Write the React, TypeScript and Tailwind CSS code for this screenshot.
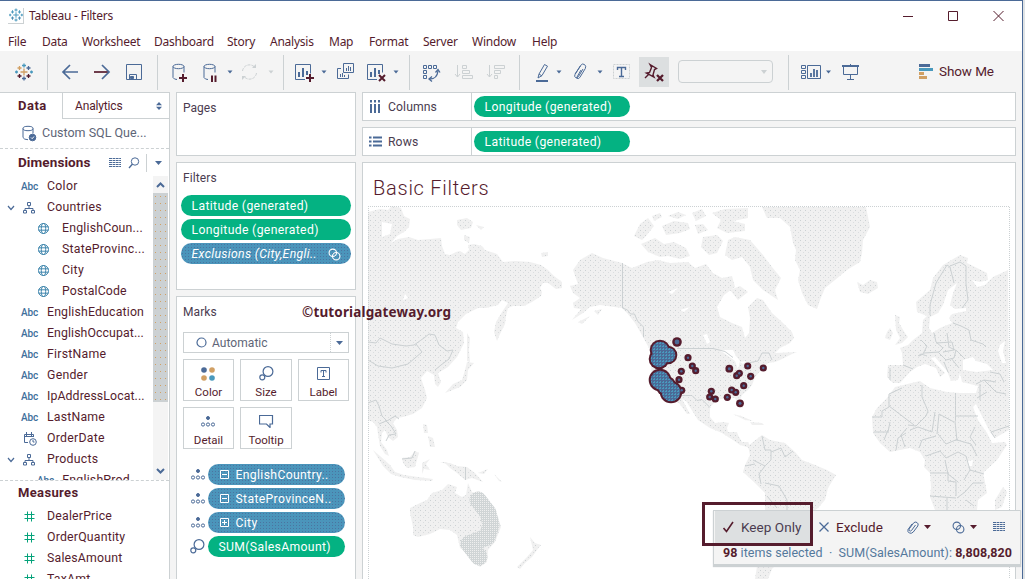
import React from "react";

const INK = "#551c2d";
const BLUE = "#4b6a97";
const GREY = "#ccd1d3";

/* Toolbar cell: drawing coordinates run along the whole bar. */
function Cell({ x, w, children, className = "" }: { x: number; w: number; children?: React.ReactNode; className?: string }) {
  return (
    <svg width={w} height={41} viewBox={`${x} 51 ${w} 41`} className={`block shrink-0 ${className}`} fill="none" stroke={BLUE} strokeWidth={1}>
      {children}
    </svg>
  );
}

const caret = (x: number, color = BLUE) => <path d={`M${x - 2.5} 70.5h5l-2.5 3z`} fill={color} stroke="none" />;
const sep = (x: number) => <path d={`M${x}.5 55v35`} stroke={GREY} />;

function Sparkle({ mixed = false, size = 18 }: { mixed?: boolean; size?: number }) {
  const c = mixed ? ["#d1a064", "#4999bd", "#d1a064", "#551c2d", "#4b6a97"] : ["#4999bd", "#4999bd", "#4999bd", "#4b8fb5", "#4999bd"];
  return (
    <svg width={size} height={size} viewBox="0 0 18 18" fill="none" strokeWidth={1.3}>
      <path d="M9 5.500v7M5.500 9h7" stroke={c[0]} />
      <path d="M9 .5v4M7 2.500h4" stroke={c[1]} />
      <path d="M9 13.500v4M7 15.500h4" stroke={c[4]} />
      <path d="M4.500 3v4M2.500 5h4" stroke={c[2]} />
      <path d="M13.500 3v4M11.500 5h4" stroke={c[4]} />
      <path d="M4.500 11v4M2.500 13h4" stroke={c[3]} />
      <path d="M13.500 11v4M11.500 13h4" stroke={c[3]} />
      <path d="M1.500 7.500v3M0 9h3M16.500 7.500v3M15 9h3" stroke={c[1]} />
    </svg>
  );
}

function Toolbar() {
  return (
    <div className="flex h-[41px] shrink-0 bg-[#f4f4f4]">
      <div className="flex w-[40px] items-center pl-[15px]"><Sparkle mixed /></div>
      <Cell x={40} w={16}>{sep(47)}</Cell>
      <Cell x={56} w={30}><path d="M78 72H63M70 65l-7 7 7 7" strokeWidth={1.7} /></Cell>
      <Cell x={86} w={32}><path d="M94 72h15" stroke={INK} strokeWidth={1.7} /><path d="M102 65l7 7-7 7" strokeWidth={1.7} /></Cell>
      <Cell x={118} w={30}><path d="M126.500 64.500h15v15h-15zM129.500 79.500v-5h7v5" /><path d="M130.500 76.500h3v2h-3z" fill={BLUE} /></Cell>
      <Cell x={148} w={16}>{sep(157)}</Cell>
      <Cell x={164} w={32}>
        <ellipse cx={178.500} cy={66.500} rx={5.500} ry={2.200} /><path d="M173 66.500v11q1 2 4 2M184 66.500v6" />
        <path d="M183 74v8M179 78h8" stroke={INK} strokeWidth={2} />
      </Cell>
      <Cell x={196} w={42}>
        <ellipse cx={209.500} cy={66.500} rx={5.500} ry={2.200} /><path d="M204 66.500v11q1 2 4 2M215 66.500v6" />
        <path d="M212 75.500v6.500M215.500 75.500v6.500" stroke={INK} strokeWidth={2} />{caret(230)}
      </Cell>
      <Cell x={238} w={38}>
        <path d="M242.500 71a7 7 0 0 1 12-4M256.500 73a7 7 0 0 1-12 4" stroke={GREY} strokeDasharray="3 1" /><path d="M256 64v4h-4zM242 80v-4h4z" fill={GREY} stroke="none" />{caret(271, GREY)}
      </Cell>
      <Cell x={276} w={12}>{sep(283)}</Cell>
      <Cell x={288} w={44}>
        <path d="M305 79.500h-9.500v-15h15v9" /><path d="M299 72v5M303 68v9M307 71v4" strokeWidth={2} />
        <path d="M310 74v8M306 78h8" stroke={INK} strokeWidth={2} />{caret(324)}
      </Cell>
      <Cell x={332} w={30}>
        <path d="M343.500 63.500h10v9h-10zM341 68.500h-3.500v10h11v-4" /><path d="M346.500 68v3M348.500 66v5M350.500 67v4M340.500 74v3M342.500 73v4M344.500 75v2" />
      </Cell>
      <Cell x={362} w={40}>
        <path d="M377 79.500h-9.500v-15h15v8" /><path d="M371 72v5M375 68v9M379 70v4" strokeWidth={2} />
        <path d="M379 75l6 6M385 75l-6 6" stroke={INK} strokeWidth={2} />{caret(396)}
      </Cell>
      <Cell x={402} w={14}>{sep(409)}</Cell>
      <Cell x={416} w={32}>
        <path d="M423.500 65.500h3v3h-3zM428.500 65.500h3v3h-3zM433.500 65.500h3v3h-3zM423.500 70.500h3v3h-3zM423.500 75.500h3v3h-3z" />
        <path d="M430 79q7 0 8-8" strokeWidth={1.300} /><path d="M435.500 72.500l2.500-3 2 3M432 76.500l-3 2.500 3 2.500" strokeWidth={1.300} />
      </Cell>
      <Cell x={448} w={32}><path d="M457.500 65v12M455 74l2.500 3 2.500-3M462.500 65.500h4v3h-4zM462.500 70.500h7v3h-7zM462.500 75.500h10v3h-10z" stroke={GREY} /></Cell>
      <Cell x={480} w={32}><path d="M489.500 65v12M487 74l2.500 3 2.500-3M494.500 65.500h10v3h-10zM494.500 70.500h6v3h-6zM494.500 75.500h3v3h-3z" stroke={GREY} /></Cell>
      <Cell x={512} w={16}>{sep(519)}</Cell>
      <Cell x={528} w={38}>
        <path d="M538 78l1-4 5.500-9.500 3 1.700-5.500 9.300zM539 74l3 2" /><path d="M536 81h12" strokeWidth={2} />{caret(559)}
      </Cell>
      <Cell x={566} w={40}>
        <path d="M583 69l-4.500 7.500q-1.500 2-3 1t-.5-3l5.500-9q2-2.500 4-1t.8 4l-5.500 9q-1.500 2-3.500.5M575 74l5.500-8M577 77l4-7" />{caret(600)}
      </Cell>
      <Cell x={606} w={32}>
        <path d="M613.500 64.500h16v14h-16z" stroke={GREY} strokeDasharray="2 1" /><path d="M617.500 70v-2.500h8V70M621.500 67.500v9M619 76.500h5" strokeWidth={1.400} />
      </Cell>
      <Cell x={638} w={32}>
        <rect x={639} y={57} width={30} height={30} fill="#dcdfe0" stroke="none" />
        <path d="M650 64.500l6.500 4-2 1-1.500 5.500 1 2-7.500-4 3-.5 2-5zM649 74l-4 4" stroke={INK} strokeWidth={1.400} />
        <path d="M657 75l6 6M663 75l-6 6" stroke={INK} strokeWidth={2.300} />
      </Cell>
      <div className="ml-2 mt-[9px] flex h-[23px] w-[95px] items-center justify-end rounded-sm border border-[#ccd1d3] pr-[5px]">
        <svg width={6} height={4}><path d="M0 0h6l-3 4z" fill={GREY} /></svg>
      </div>
      <Cell x={773} w={20}>{sep(788)}</Cell>
      <Cell x={793} w={44}>
        <path d="M801.500 65.500h4v3h-4zM801.500 70.500h4v3h-4zM801.500 75.500h4v3h-4zM807.500 65.500h13v13h-13z" />
        <path d="M811 73v4M814 69v8M817 70v7" strokeWidth={1.800} />{caret(828.500)}
      </Cell>
      <Cell x={837} w={30}><path d="M842 66h17" strokeWidth={2} /><path d="M843.500 67v7.500h14V67M850.500 64v2M850.500 74.500v5M847 79.500h7" /></Cell>
      <Cell x={867} w={72}>
        <g stroke="none"><path d="M919 64h11v3h-11z" fill={BLUE} /><path d="M919 68h14v3h-14z" fill="#4999bd" /><path d="M919 72h5v3h-5zM919 76h8v3h-8z" fill="#d1a064" /></g>
      </Cell>
      <span className="pt-[11px] font-['Roboto',sans-serif] text-[13.500px] leading-[18px] tracking-[-0.1px] text-[#551c2d]">Show Me</span>
    </div>
  );
}

const Globe = () => (
  <svg width={13} height={13} viewBox="0 0 13 13" fill="none" stroke="#3f86ad"><circle cx={6.500} cy={6.500} r={5} /><ellipse cx={6.500} cy={6.500} rx={2.200} ry={5} /><path d="M1.500 4.800h10M1.500 8.200h10" /></svg>
);
const Tree = () => (
  <svg width={12} height={12} viewBox="0 0 12 12" fill="none" stroke={BLUE}><path d="M4.500.5h3v3h-3zM.5 8.500h3v2.500h-3zM8.500 8.500h3v2.500h-3zM6 4v2.500M2 8.500v-2h8v2" /></svg>
);
const Hash = () => (
  <svg width={11} height={11} viewBox="0 0 11 11" fill="none" stroke="#04a27a" strokeWidth={1}><path d="M3.500.5v10M7.500.5v10M.5 3.500h10M.5 7.500h10" /></svg>
);
const CalendarClock = () => (
  <svg width={14} height={14} viewBox="0 0 14 14" fill="none" stroke={BLUE}><path d="M5 10.500H1.500v-8h9V5M1.500 4.500h9M3.500 0v4M8.500 0v4" /><circle cx={10} cy={10} r={3.300} /><path d="M10 8v2h1.500" /></svg>
);
const Chevron = () => <svg width={8} height={6} viewBox="0 0 8 6" fill="none" stroke={BLUE} strokeWidth={1.200}><path d="M1 1l3 3.500L7 1" /></svg>;
const ListGrid = () => (
  <svg width={12} height={10} viewBox="0 0 12 10" stroke={BLUE} strokeWidth={1}><path d="M0 .5h12M0 2.500h12M0 4.500h12M0 6.500h12M0 8.500h12" strokeDasharray="3 0.600 2.400 0.600" /></svg>
);
const Dots = () => (
  <svg width={14} height={11} viewBox="0 0 14 11" fill="none" stroke={BLUE}><circle cx={7} cy={2} r={1.500} fill={BLUE} /><circle cx={2} cy={8.500} r={1.600} /><circle cx={7} cy={8.500} r={1.600} /><circle cx={12} cy={8.500} r={1.600} /></svg>
);
const SizeIcon = () => (
  <svg width={15} height={15} viewBox="0 0 15 15" fill="none" stroke={BLUE} strokeWidth={1.200}><circle cx={9} cy={5.500} r={4.900} /><circle cx={3.300} cy={11.300} r={2.500} fill="#fff" /></svg>
);
const Rings = ({ color = BLUE }: { color?: string }) => (
  <svg width={13} height={13} viewBox="0 0 13 13" fill="none" stroke={color} strokeWidth={1.100}><circle cx={4.800} cy={4.800} r={3.700} /><circle cx={8.200} cy={8.200} r={3.700} /></svg>
);
const Tri = ({ color = BLUE }: { color?: string }) => <svg width={7} height={4}><path d="M0 0h7L3.500 4z" fill={color} /></svg>;

type Kind = "abc" | "tree" | "globe" | "date";
const dims: [Kind, string, string][] = [
  ["abc", "Color", "tracking-[0.3px]"],
  ["tree", "Countries", "tracking-[0.25px]"],
  ["globe", "EnglishCoun...", "tracking-[0.2px]"],
  ["globe", "StateProvinc...", "tracking-[0.25px]"],
  ["globe", "City", "tracking-[0.3px]"],
  ["globe", "PostalCode", "tracking-[0.15px]"],
  ["abc", "EnglishEducation", "tracking-[0.17px]"],
  ["abc", "EnglishOccupat...", "tracking-[0.1px]"],
  ["abc", "FirstName", "tracking-[0.25px]"],
  ["abc", "Gender", "tracking-[0.25px]"],
  ["abc", "IpAddressLocat...", "tracking-[0.1px]"],
  ["abc", "LastName", "tracking-[0.2px]"],
  ["date", "OrderDate", "tracking-[0.25px]"],
  ["tree", "Products", "tracking-[0.25px]"],
];

const Abc = () => <span className="text-[10px] font-medium tracking-[-0.1px] text-[#3f6f9b]">Abc</span>;

function DataPane() {
  return (
    <div className="flex h-full w-[170px] shrink-0 flex-col border-r border-t border-[#ccd1d3] bg-white">
      <div className="flex h-[26px] shrink-0">
        <div className="w-[62px] pl-[18px] text-[13px] font-bold leading-[25px] tracking-[0.5px]">Data</div>
        <div className="flex flex-1 items-center justify-between border-b border-l border-[#ccd1d3] pl-[12px] pr-[7px] text-[12px]">
          <span className="tracking-[-0.15px]">Analytics</span>
          <svg width={6} height={8}><path d="M0 3.200h6L3 0zM0 4.800h6L3 8z" fill={BLUE} /></svg>
        </div>
      </div>
      <div className="flex h-[30px] shrink-0 items-center border-b border-dashed border-[#ccd1d3] pl-[22px] text-[12.500px] text-[#5e6577]">
        <svg width={15} height={17} viewBox="0 0 15 17" fill="none" stroke={BLUE}><ellipse cx={6} cy={3.500} rx={5} ry={2.200} /><path d="M1 3.500v9q1 2.200 5 2.200M11 3.500v5" /><circle cx={10.500} cy={12.500} r={3.300} fill={BLUE} /><path d="M9 12.500l1.200 1.200L12 11.500" stroke="#fff" /></svg>
        <span className="ml-[5px] whitespace-nowrap">Custom SQL Que...</span>
      </div>
      <div className="flex h-[27px] shrink-0 items-center pl-[18px]">
        <span className="w-[91px] text-[13.500px] font-bold tracking-[0.1px]">Dimensions</span>
        <ListGrid />
        <svg className="ml-[7px]" width={12} height={12} viewBox="0 0 12 12" fill="none" stroke={BLUE}><circle cx={7} cy={4.500} r={3.700} /><path d="M4.500 7L1 11" strokeWidth={1.300} /></svg>
        <span className="ml-[6px] h-[18px] w-px bg-[#ccd1d3]" />
        <span className="ml-[8px]"><Tri /></span>
      </div>
      <div className="flex h-[304px] shrink-0 overflow-hidden">
        <div className="w-[153px] overflow-hidden">
          {dims.map(([kind, name, cls]) => (
            <div key={name} className="flex h-[21px] items-center">
              <span className="flex w-[18px] justify-end pr-[3px]">{kind === "tree" && <Chevron />}</span>
              <span className={`flex shrink-0 items-center ${kind === "globe" ? "w-[44px] pl-[19px]" : "w-[29px] pl-[3px]"}`}>
                {kind === "abc" && <Abc />}
                {kind === "tree" && <span className="pl-[2px]"><Tree /></span>}
                {kind === "globe" && <Globe />}
                {kind === "date" && <span className="pl-[2px]"><CalendarClock /></span>}
              </span>
              <span className={`whitespace-nowrap text-[12.300px] ${cls}`}>{name}</span>
            </div>
          ))}
          <div className="flex h-[21px] items-center pl-[37px]"><Abc /><span className="ml-[8px] whitespace-nowrap text-[12.300px] tracking-[0.2px]">EnglishProd...</span></div>
        </div>
        <div className="flex w-[15px] flex-col items-center bg-[#f4f4f4]">
          <div className="flex h-[17px] w-full items-center justify-center"><svg width={9} height={6} fill="none" stroke={BLUE} strokeWidth={2}><path d="M1 5l3.500-3.500L8 5" /></svg></div>
          <div className="h-[209px] w-full bg-[#ccd1d3] bg-[radial-gradient(circle,#d1a064_0.6px,transparent_0.7px)] bg-[length:5px_7px]" />
          <div className="flex flex-1 items-end pb-[6px]"><svg width={9} height={6} fill="none" stroke={BLUE} strokeWidth={2}><path d="M1 1l3.500 3.500L8 1" /></svg></div>
        </div>
      </div>
      <div className="h-px shrink-0 border-b border-dashed border-[#ccd1d3]" />
      <div className="h-[25px] shrink-0 pl-[18px] text-[13px] font-bold leading-[24px] tracking-[0.35px]">Measures</div>
      {["DealerPrice", "OrderQuantity", "SalesAmount", "TaxAmt"].map((m) => (
        <div key={m} className="flex h-[21px] shrink-0 items-center pl-[24px]"><Hash /><span className="ml-[12px] text-[12.300px] tracking-[0.2px]">{m}</span></div>
      ))}
    </div>
  );
}

const pill = "flex h-[21px] items-center rounded-full pl-[10.5px] pt-px text-[12.2px] tracking-[0.35px] text-white whitespace-nowrap";
const dither = "bg-[#4b95bb] bg-[radial-gradient(circle,#4b74a0_0.5px,transparent_0.7px)] bg-[length:3px_3px]";

function MarkButton({ label, children }: { label: string; children: React.ReactNode }) {
  return (
    <div className="flex h-[42px] flex-col items-center border border-[#ccd1d3]">
      <div className="flex h-[27px] items-center justify-center">{children}</div>
      <span className="text-[11.500px] leading-[11px]">{label}</span>
    </div>
  );
}

function MarkPill({ expanded, label }: { expanded: boolean; label: string }) {
  return (
    <div className="flex h-[21px] items-center">
      <span className="w-[18px] pl-px"><Dots /></span>
      <span className={`${pill} ${dither} w-[137px]`}>
        <svg className="mr-[7px] -mt-px ml-px" width={9} height={9} viewBox="0 0 9 9" fill="none" stroke="#fff"><path d={expanded ? "M.5.5h8v8h-8zM2 4.500h5" : "M.5.5h8v8h-8zM2 4.500h5M4.500 2v5"} /></svg>
        {label}
      </span>
    </div>
  );
}

function Shelves() {
  const card = "border border-[#ccd1d3] bg-white shrink-0";
  return (
    <div className="ml-[6px] flex w-[180px] shrink-0 flex-col gap-[6px] text-[12px]">
      <div className={`${card} h-[64px] pl-[6px] pt-[6px] leading-[18px] text-[#4a3c50]`}>Pages</div>
      <div className={`${card} h-[128px] px-[4px] pt-[6px]`}>
        <div className="pl-[2px] leading-[18px] tracking-[0.1px] text-[#4a3c50]">Filters</div>
        <div className="mt-[8px] flex flex-col gap-[3px]">
          <div className={`${pill} bg-[#04b282]`}>Latitude (generated)</div>
          <div className={`${pill} bg-[#04b282]`}>Longitude (generated)</div>
          <div className={`${pill} ${dither} justify-between pr-[10px] italic`}>Exclusions (City,Engli..<Rings color="#fff" /></div>
        </div>
      </div>
      <div className={`${card} h-[300px] px-[6px] pt-[6px]`}>
        <div className="leading-[18px] tracking-[0.1px] text-[#4a3c50]">Marks</div>
        <div className="mt-[11px] flex h-[21px] w-[166px] items-center border border-[#ccd1d3] pl-[12px] text-[#5e6577]">
          <svg width={11} height={11}><circle cx={5.500} cy={5.500} r={4.500} fill="none" stroke={BLUE} strokeWidth={1.200} /></svg>
          <span className="ml-[5px] flex-1 tracking-[0.05px]">Automatic</span>
          <span className="flex h-full w-[18px] items-center justify-center border-l border-dotted border-[#ccd1d3]"><Tri /></span>
        </div>
        <div className="mt-[6px] grid w-[166px] grid-cols-[51px_52px_51px] gap-[6px]">
          <MarkButton label="Color"><svg width={14} height={14} className="mr-[2px]"><circle cx={3} cy={3} r={2.800} fill={BLUE} /><circle cx={11} cy={3} r={2.800} fill="#d1a064" /><circle cx={3} cy={11} r={2.800} fill="#d1a064" /><circle cx={11} cy={11} r={2.800} fill="#4999bd" /></svg></MarkButton>
          <MarkButton label="Size"><SizeIcon /></MarkButton>
          <MarkButton label="Label"><svg className="mr-px" width={13} height={13} viewBox="0 0 13 13" fill="none" stroke={BLUE}><path d="M.5.5h12v12H.5zM4 5.500v-2h5v2M6.500 3.500v6M5 9.500h3" /></svg></MarkButton>
          <MarkButton label="Detail"><span className="mr-[2px]"><Dots /></span></MarkButton>
          <MarkButton label="Tooltip"><svg width={15} height={13} viewBox="0 0 15 13" fill="none" stroke={BLUE}><path d="M.5.500h13v8.500h-2.500v3.500l-3.500-3.500h-7z" strokeWidth={1.200} /></svg></MarkButton>
        </div>
        <div className="mt-[15px] flex flex-col gap-[3px] pl-[7px]">
          <MarkPill expanded label="EnglishCountry.." />
          <MarkPill expanded label="StateProvinceN.." />
          <MarkPill expanded={false} label="City" />
          <div className="flex h-[21px] items-center">
            <span className="w-[18px]"><SizeIcon /></span>
            <span className={`${pill} w-[137px] bg-[#04b282]`}>SUM(SalesAmount)</span>
          </div>
        </div>
      </div>
    </div>
  );
}

const land = [
  "M368 212L380 209 388 210 392 206 401 208 404 216 410 219 409 227 404 232 397 236 391 243 398 239 409 237 418 240 430 239 441 238 442 246 445 254 450 255 456 252 460 251 465 254 469 250 468 245 474 244 482 246 485 250 497 254 503 262 515 261 530 262 541 265 548 270 554 276 562 282 562 288 556 289 548 283 543 283 540 288 542 292 541 296 532 302 524 306 513 306 508 308 506 316 505 324 500 334 497 341 494 332 496 322 502 312 508 303 502 300 498 305 486 308 478 308 466 314 458 322 456 328 463 332 464 343 457 357 448 367 438 373 441 382 438 387 435 384 434 375 427 371 421 378 425 390 427 398 422 408 413 414 403 417 397 418 393 423 397 430 398 437 393 441 388 437 385 430 382 433 381 442 387 450 389 456 385 454 380 446 378 434 377 427 373 422 368 420Z",
  "M445 393L453 384 462 380 465 370 467 362 474 363 468 370 467 380 460 387 450 391Z",
  "M467 333L470 338 469 350 470 362 467 361Z",
  "M373 450L380 456 390 465 395 472 404 475 418 477 433 479 432 481 415 480 400 477 391 474 383 466Z",
  "M402 458L410 457 415 451 419 453 417 460 415 467 407 468 403 463Z",
  "M422 463l8-4-4 5 4 6-6-1-2 5z", "M423 424l4 1 1 8-4 0zM428 436l5 2 2 9-5 0z", "M440 462l6 0 8 4z",
  "M445 463L450 463 457 466 467 467 475 473 483 482 472 478 465 480 457 473 450 468Z", "M478 473l10-4-4 5zM494 474l8 8-3-1z",
  "M410 508L420 503 427 500 432 493 442 490 448 484 457 487 455 493 462 497 466 495 468 483 472 492 478 495 488 503 498 517 501 527 495 542 488 550 487 562 480 567 472 560 468 553 460 548 457 535 450 530 440 529 430 534 418 537 413 535 413 527 410 513Z",
  "M530 537L535 543 541 545 537 550 532 557 525 563 520 569 517 567 527 557 533 550Z",
  "M573 270L580 260 592 253 603 258 622 263 632 268 647 262 658 260 670 263 688 262 695 268 706 264 713 273 722 278 732 276 735 287 724 295 717 307 720 317 732 323 742 327 745 338 749 333 750 318 748 307 757 298 763 300 772 313 782 322 792 332 794 338 790 343 780 348 775 353 797 352 792 354 780 360 775 362 768 363 763 368 755 377 752 385 748 390 742 395 740 400 743 408 739 407 735 398 727 398 717 400 710 407 710 417 715 423 723 422 729 423 727 428 728 432 737 432 738 435 742 442 748 442 752 450 747 447 740 445 733 440 722 433 710 428 698 420 693 412 686 401 682 399 690 414 687 414 679 403 670 400 658 392 652 385 651 365 650 350 643 337 635 323 627 313 622 308 600 305 590 307 583 313 572 320 581 309 574 308 573 303 580 298 573 293 570 286 578 284Z",
  "M728 240L735 237 750 240 763 255 772 267 781 278 775 290 778 300 763 290 753 280 750 267 742 257 732 260 725 255Z",
  "M641 244L655 238 664 244 674 242 686 248 690 256 680 259 668 256 660 257 648 252Z", "M634 236l6-12 8-6 6 8-8 10-4 4z", "M662 226l12-5 14 2 2 6-10 4-14 2z", "M668 216l10-4 8 3-8 4zM652 216l8-3 2 4-8 4z",
  "M703 237l14-2 6 6-6 12-8 2-8-8z", "M712 213L725 209 748 208 748 218 733 221 745 224 745 231 727 233 717 228 721 220Z", "M692 213l10-4 4 7-10 5z", "M695 225l8-1 5 6-10 4z", "M730 290l10-4 8 6-10 8z",
  "M762 207L866 207 870 227 863 240 862 253 860 262 847 270 835 280 825 288 820 300 817 309 808 305 802 293 798 280 800 270 795 260 796 250 793 243 790 227 780 218 767 218Z",
  "M857 282L863 285 870 280 877 282 878 288 868 294 860 292Z",
  "M895 315L900 317 899 323 905 333 908 337 902 343 895 345 900 338 896 330Z", "M890 328L893 333 890 340 885 338 887 332Z",
  "M917 312L916 302 930 290 933 278 943 265 960 255 968 258 967 263 987 273 988 280 980 282 972 280 977 287 985 285 990 280 993 277 1008 270 1009 430 995 438 990 432 976 404 973 407 978 420 987 433 992 443 1005 442 1007 445 997 460 983 473 985 482 987 493 978 500 977 510 965 530 945 530 935 510 930 497 931 487 930 473 924 467 925 460 920 452 910 448 890 452 880 443 873 433 872 417 877 408 887 398 895 387 920 381 930 388 947 392 960 393 976 393 978 386 962 382 960 373 958 380 951 381 947 371 935 357 931 358 937 365 945 373 940 377 936 368 925 364 917 367 910 372 900 383 893 383 887 377 888 365 903 365 902 353 900 348 908 345 913 340 922 333 923 320 927 316Z",
  "M1003 487L1007 492 1002 507 995 510 995 500Z",
  "M748 446L753 442 762 435 770 440 785 443 795 452 802 460 815 465 827 470 836 475 828 488 825 500 818 508 805 518 795 540 772 569 768 579 755 579 758 560 765 510 765 493 755 483 743 472 745 465 750 455Z",
  "M733 414l8 2 12 5-8-1zM750 422l12 1 2 2-12 0z", "M457 220l10-2 6 4-2 6-10 2-4-5zM476 225l8 2-3 3zM464 235l6 2-1 6-5-3zM541 253l7-1 0 4-6 1z", "M578 322l12-6-8 8zM594 311l8-2-4 6z",
];

const water = [
  "M943 305L948 290 957 283 953 293 950 305 955 309 966 308 966 311 952 314 949 318 952 323 940 328 932 333 929 328 930 317 938 313Z",
  "M963 360L973 357 976 361 987 364 993 370 977 372 963 370Z",
  "M1000 345l5-4-2 10 3 12-4 0-4-12z", "M703 335l4-1 3 8-3 2z", "M680 310l10-3-6 5zM668 292l10-4-6 6z", "M719 350l14 0 3 6 4 5-2 8-3-8-8-6zM740 362l6-1-3 3z", "M382 222l10 2-2 10-8 3z", "M405 294l3 4-5 2z", "M968 461l5-1-1 6-4 0z",
];

const borders = [
  "M622.500 263V308l5 2 3 4 4 0 3 7 6 6v10", "M677 348.500h36l12 3 8 6M748 363l10-2 4-8 7 0 3 7", "M682 395.500h10l5 5 5-1 8 8", "M368 342l8 1 4-5 12 6 14 2 8-1 10-7 5-4 6 1 4 10 8 6 6-1-4 9-8 6-6 5M368 360l10 6 14 2 16-4 14-12-6-8",
  "M368 403l8-3 3 6 3 10 5 5 8-5 4 3M379 424l7-3 5 5 5 8-7 1-3 6M402 459l10-1 3-7", "M465.500 467v13",
  "M930 315l0-10 6-22 11-18 3 2 4 16M950 266l10-4 6 4 0 18 2 16-6 8", "M921 340l6 6-4 8-4 2M934 333l2 9 7 6-4 4-15 1M936 343l16-1 2 8-11 2M953 323l8 3 8 4 2 10 12 4 3 3M947 333l2 14 8 4 8 8M938 352l8 8 8-2 2-8M944 362l4 10M951 358l8 10M918 356l3-2 6 2",
  "M890 368v12M903 365l10 4M889 407v-13l13-6M872 417l10 0 0-6 7-4M922 385v12l6 14-2 5-10 10-8-1M889 406l25 19M955.500 393v28M955 416h23M874 432l14 0 2-10M888 430l-4 10M896 450l2-12 8-5M905 447l-4-12 6-7M910 430l8-3 14 5 3-20M937 434l2-20 15 8M936 436l-14 4-3 8M938 434l8 10 12-5M955 421l2 20M926 456l14-5 6 7 12-6M957 440l14 4 6 12M975 427l-5 10 6 8M945 460l3 14 10 8M930 473h18l0 8 8 1 0 14M930 496l26 2M958 452l8 4 4 14-6 10M970 470l14 4M957 498l8-6 8-9 10 0M947 498v12M966 500l8 6",
  "M976 384l8-4 12 2M980 384v16M984 380l12 12 10 2M990 372l10 2 4 8M977 398l10-6M995 438l-4-6 18-6",
  "M762 436l3 14 6 0 0 10-6 6-12-6M771 452l10-4 4 9 8-6M765 466l-6 8 2 10M765 483l14 3 8 14 0 10M767 496l10 12M745 466l10-2",
];

const blobs = [[660, 350, 9], [668, 355, 8], [659, 359, 9], [660, 380, 10], [666, 386, 9], [671, 392, 10]];
const marks = [
  [677, 342, 4.200], [688, 357.700, 3], [692.300, 366, 3], [695.700, 370.700, 3], [681.300, 371.300, 3], [679, 379.700, 3], [681.700, 390.300, 3],
  [711.300, 391.300, 3], [709.700, 397, 3], [715.300, 399, 3], [727.300, 397.300, 3], [731.700, 390, 3], [735.700, 392.300, 3], [743.700, 385.700, 3], [740, 403.300, 3.300],
  [729.300, 368.700, 3.300], [736.700, 375.700, 3], [739.300, 373.300, 3], [747.700, 366, 3], [750.700, 376.300, 3], [763.300, 368, 3],
];

function WorldMap() {
  return (
    <svg width={642} height={373} viewBox="368 206 642 373" className="block">
      <defs>
        <pattern id="land" width={5} height={5} patternUnits="userSpaceOnUse"><rect width={5} height={5} fill="#f0f0f0" /><rect width={1} height={1} fill={GREY} /><rect x={3} y={2} width={1} height={1} fill="#dadddf" /></pattern>
        <pattern id="muted" width={2} height={2} patternUnits="userSpaceOnUse"><rect width={2} height={2} fill="#d0d5d6" /><rect width={1} height={1} fill="#efefef" /></pattern>
        <pattern id="mark" width={3} height={3} patternUnits="userSpaceOnUse"><rect width={3} height={3} fill="#4b6a97" /><rect width={1} height={2} fill="#4999bd" /><rect x={2} y={1} width={1} height={1} fill="#4999bd" /></pattern>
      </defs>
      <g fill="url(#land)">{land.map((d) => <path key={d} d={d} />)}</g>
      <g fill="#fff">{water.map((d) => <path key={d} d={d} />)}</g>
      <g fill="none" stroke={GREY}>{borders.map((d) => <path key={d} d={d} />)}</g>
      <path d="M478 500L488 513 491 525 487 537 469 544 479 557" fill="none" stroke="url(#muted)" strokeWidth={17} strokeLinecap="round" strokeLinejoin="round" />
      <path d="M368 206.500h641.500V579M368.500 206V579" fill="none" stroke={GREY} strokeDasharray="1 1" />
      {blobs.map(([x, y, r], i) => <circle key={i} cx={x} cy={y} r={r + 1.300} fill={INK} />)}
      {marks.map(([x, y, r], i) => <circle key={i} cx={x} cy={y} r={r + 0.600} fill={INK} />)}
      {blobs.map(([x, y, r], i) => <circle key={i} cx={x} cy={y} r={r - 0.700} fill="url(#mark)" />)}
      {marks.map(([x, y, r], i) => <circle key={i} cx={x} cy={y} r={r - 1.800} fill={BLUE} />)}
    </svg>
  );
}

function Shelf({ label, value, icon }: { label: string; value: string; icon: React.ReactNode }) {
  return (
    <div className="flex h-[29px] shrink-0 border border-[#ccd1d3] bg-white">
      <div className="flex w-[109px] items-center border-r border-[#ccd1d3] pl-[6px] pt-px text-[12.200px] tracking-[0.1px] text-[#4a3c50]">
        <span className="-mt-px w-[19px]">{icon}</span>{label}
      </div>
      <div className={`${pill} ml-[2px] mt-[3px] w-[156px] bg-[#04b282]`}>{value}</div>
    </div>
  );
}

function SelectionTooltip() {
  return (
    <div className="absolute left-[713px] top-[510px] h-[56px] w-[308px] border border-b-2 border-[#ccd1d3] bg-[#f4f4f4] shadow-[0_1px_1px_#ccd1d3]">
      <div className="flex h-[32px] items-center text-[13.500px] text-[#551c2d]">
        <div className="ml-[1px] flex h-[32px] w-[95px] items-center bg-[#dde0e1] pl-[8px] text-[#4a3c50]">
          <svg width={11} height={12} viewBox="0 0 11 12" fill="none" stroke={INK} strokeWidth={1.600}><path d="M.5 7l3 3.500L10 1" /></svg>
          <span className="ml-[7px] whitespace-nowrap tracking-[0.05px]">Keep Only</span>
        </div>
        <svg className="ml-[9px]" width={10} height={10} fill="none" stroke={BLUE} strokeWidth={1.300}><path d="M.5.5l9 9M9.500.5l-9 9" /></svg>
        <span className="ml-[7px] w-[71px]">Exclude</span>
        <svg width={12} height={13} viewBox="0 0 12 13" fill="none" stroke={BLUE}><path d="M8.500 4l-4 5.500q-1 1-2 .3t-.2-2L6.500 2q1.500-1.700 3.500-.5t.8 3.500l-4.500 6q-2 2-4 1T1 8.500l4-5.500" /></svg>
        <span className="ml-[5px]"><Tri color={INK} /></span>
        <span className="ml-[21px]"><Rings /></span>
        <span className="ml-[5px]"><Tri color={INK} /></span>
        <span className="ml-[16px]"><ListGrid /></span>
      </div>
      <div className="whitespace-pre pl-[9px] pt-px text-[12.500px] leading-[18px] tracking-[0.05px] text-[#54799c]"><b className="text-[#551c2d]">98</b> items selected  ·  SUM(SalesAmount): <b className="text-[#551c2d]">8,808,820</b></div>
    </div>
  );
}

const menus: [string, string][] = [
  ["File", "w-[34px]"], ["Data", "w-[40px]"], ["Worksheet", "w-[72px]"], ["Dashboard", "w-[73px]"], ["Story", "w-[43px]"], ["Analysis", "w-[59px]"],
  ["Map", "w-[40px]"], ["Format", "w-[54px]"], ["Server", "w-[49px]"], ["Window", "w-[60px]"], ["Help", "w-[30px]"],
];

export default function App() {
  return (
    <div className="relative flex h-[579px] w-[1025px] overflow-hidden bg-[#dfe3e5] font-['Roboto',sans-serif] text-[#551c2d]">
      <div className="flex w-[1023px] shrink-0 flex-col border-r border-t border-[#4b6a97] bg-white">
        <div className="flex h-[29px] shrink-0 items-center pl-[8px] font-['Noto_Sans',sans-serif] text-[12px]">
          <span className="flex h-[16px] w-[16px] items-center justify-center border-b border-r border-[#ccd1d3]"><Sparkle size={14} /></span>
          <span className="ml-[5px] flex-1 tracking-[-0.25px]">Tableau - Filters</span>
          <svg width={102} height={12} viewBox="0 0 102 12" fill="none" stroke={INK} className="mr-[18px]"><path d="M1 6.500h10M46.500 1.500h9v9h-9zM91.500 1l10 10M101.500 1l-10 10" /></svg>
        </div>
        <div className="flex h-[21px] shrink-0 pl-[8px] font-['Noto_Sans',sans-serif] text-[12px] leading-[23px]">
          {menus.map(([m, w]) => <span key={m} className={`${w} shrink-0 whitespace-nowrap tracking-[-0.25px]`}>{m}</span>)}
        </div>
        <Toolbar />
        <div className="flex h-[487px] shrink-0 overflow-hidden bg-[#f4f4f4]">
          <DataPane />
          <Shelves />
          <div className="ml-[6px] flex w-[654px] shrink-0 flex-col gap-[6px]">
            <Shelf label="Columns" value="Longitude (generated)" icon={<svg width={12} height={13} stroke={BLUE} strokeWidth={2}><path d="M2 0v2.500M6 0v2.500M10 0v2.500M2 4v9M6 4v9M10 4v9" /></svg>} />
            <Shelf label="Rows" value="Latitude (generated)" icon={<svg width={13} height={11} stroke={BLUE} strokeWidth={2}><path d="M0 1.500h2.500M0 5.500h2.500M0 9.500h2.500M4 1.500h9M4 5.500h9M4 9.500h9" /></svg>} />
            <div className="h-[430px] shrink-0 border border-[#ccd1d3] bg-white pl-[5px]">
              <div className="h-[43px] pl-[5px] pt-[12px] text-[20px] font-light leading-[26px] tracking-[0.75px]">Basic Filters</div>
              <WorldMap />
            </div>
          </div>
        </div>
      </div>
      <div className="absolute left-[302px] top-[303px] whitespace-nowrap font-['Noto_Sans',sans-serif] text-[13.500px] font-bold leading-[18px] tracking-[0.15px]">©tutorialgateway.org</div>
      <SelectionTooltip />
      <div className="absolute left-[702px] top-[502px] h-[44px] w-[111px] border-[3px] border-[#551c2d]" />
    </div>
  );
}
